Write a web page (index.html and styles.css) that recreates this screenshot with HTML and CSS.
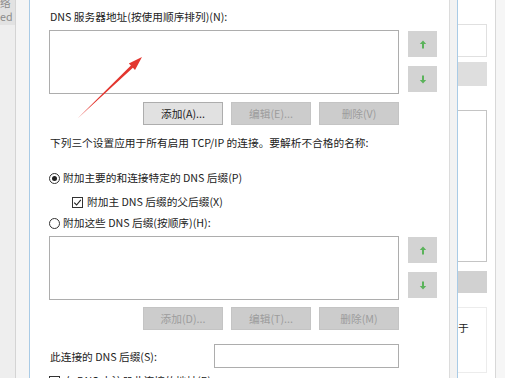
FILE: index.html
```html
<!DOCTYPE html>
<html lang="zh-CN">
<head>
  <meta charset="UTF-8">
  <title>DNS 设置</title>
  <link rel="stylesheet" href="styles.css">
</head>
<body>
  <div class="desk">
    <div class="left-win">
      <div class="left-tab"><span>络</span><span>ed</span></div>
    </div>
    <div class="left-frame"></div>

    <div class="dialog">
      <div class="label">DNS 服务器地址(按使用顺序排列)(N):</div>
      <div class="list-row">
        <div class="listbox"></div>
        <div class="side-btns">
          <div class="side-btn">
            <svg width="8" height="9" viewBox="0 0 8 9"><path d="M4 0.5 L0.8 4 H3 V8.5 H5 V4 H7.2 Z" fill="#5bb35b"/></svg>
          </div>
          <div class="side-btn">
            <svg width="8" height="9" viewBox="0 0 8 9"><path d="M4 8.5 L0.8 5 H3 V0.5 H5 V5 H7.2 Z" fill="#5bb35b"/></svg>
          </div>
        </div>
      </div>
      <div class="btn-row">
        <div class="btn on">添加(A)...</div>
        <div class="btn">编辑(E)...</div>
        <div class="btn">删除(V)</div>
      </div>

      <div class="note">下列三个设置应用于所有启用 TCP/IP 的连接。要解析不合格的名称:</div>

      <div class="option first">
        <span class="radio checked"></span>附加主要的和连接特定的 DNS 后缀(P)
      </div>
      <div class="option sub">
        <span class="check"><svg width="9" height="9" viewBox="0 0 9 9"><path d="M1.2 4.6 L3.6 7 L7.8 1.8" fill="none" stroke="#222" stroke-width="1.1"/></svg></span>附加主 DNS 后缀的父后缀(X)
      </div>
      <div class="option">
        <span class="radio"></span>附加这些 DNS 后缀(按顺序)(H):
      </div>

      <div class="list-row">
        <div class="listbox"></div>
        <div class="side-btns">
          <div class="side-btn">
            <svg width="8" height="9" viewBox="0 0 8 9"><path d="M4 0.5 L0.8 4 H3 V8.5 H5 V4 H7.2 Z" fill="#5bb35b"/></svg>
          </div>
          <div class="side-btn">
            <svg width="8" height="9" viewBox="0 0 8 9"><path d="M4 8.5 L0.8 5 H3 V0.5 H5 V5 H7.2 Z" fill="#5bb35b"/></svg>
          </div>
        </div>
      </div>
      <div class="btn-row second">
        <div class="btn">添加(D)...</div>
        <div class="btn">编辑(T)...</div>
        <div class="btn">删除(M)</div>
      </div>

      <div class="suffix-row">
        <span>此连接的 DNS 后缀(S):</span>
        <div class="textbox"></div>
      </div>
      <div class="option last">
        <span class="check"></span>在 DNS 中注册此连接的地址(R)
      </div>
    </div>

    <div class="right-frame"></div>
    <div class="right-win">
      <div class="r-input"></div>
      <div class="r-btn"></div>
      <div class="r-list"></div>
      <div class="r-btn dark"></div>
      <div class="r-box">于</div>
    </div>
    <div class="right-edge"></div>

    <svg class="arrow" width="505" height="378" viewBox="0 0 505 378">
      <polygon points="77,119 132.9,67.8 135,70 142,57 128.8,63.4 130.9,65.6" fill="#e3362f"/>
    </svg>
  </div>
</body>
</html>
```

FILE: styles.css
```css
body {
  margin: 0;
  width: 505px;
  height: 378px;
  overflow: hidden;
  font-family: "Noto Sans CJK SC", "Noto Sans", sans-serif;
  font-size: 10.7px;
  color: #222;
  background: #fff;
}

.desk {
  position: relative;
  display: flex;
  height: 378px;
}

/* window behind, left */
.left-win {
  width: 15px;
  background: #eeeeee;
  border-right: 1px solid #d4d4d4;
}

.left-tab {
  height: 25px;
  background: #e2e2e2;
  color: #8a8a8a;
  overflow: hidden;
  display: flex;
  flex-direction: column;
  line-height: 14px;
}

.left-tab span:first-child {
  margin-top: -4px;
}

.left-frame {
  width: 13px;
  background: #f5f5f5;
  border-right: 1px solid #a9cbe6;
}

/* main dialog */
.dialog {
  width: 420px;
  box-sizing: border-box;
  border-right: 1px solid #dcdcdc;
  padding: 9px 0 0 19px;
  background: #fff;
}

.label {
  line-height: 16px;
  padding-left: 1px;
}

.list-row {
  display: flex;
  margin-top: 5px;
}

.listbox {
  width: 350px;
  height: 64px;
  box-sizing: border-box;
  border: 1px solid #adadad;
  background: #fff;
}

.side-btns {
  display: flex;
  flex-direction: column;
  gap: 9px;
  margin: 1px 0 0 9px;
}

.side-btn {
  width: 29px;
  height: 26px;
  background: #d3d3d3;
  display: flex;
  align-items: center;
  justify-content: center;
}

.btn-row {
  display: flex;
  justify-content: flex-end;
  gap: 8px;
  width: 350px;
  margin-top: 8px;
}

.btn-row.second {
  margin-top: 7px;
}

.btn {
  width: 80px;
  height: 23px;
  box-sizing: border-box;
  border: 1px solid #c4c4c4;
  background: #cccccc;
  color: #9c9c9c;
  display: flex;
  align-items: center;
  justify-content: center;
}

.btn.on {
  background: #e1e1e1;
  border-color: #adadad;
  color: #222;
}

.note {
  margin-top: 10px;
  line-height: 16px;
  padding-left: 1px;
}

.option {
  display: flex;
  align-items: center;
  line-height: 16px;
  margin-top: 5px;
}

.option.first {
  margin-top: 19px;
}

.option.sub {
  margin-top: 8px;
  padding-left: 23px;
}

.option.last {
  margin-top: 5px;
}

.radio {
  position: relative;
  width: 11px;
  height: 11px;
  box-sizing: border-box;
  border: 1px solid #333;
  border-radius: 50%;
  margin-right: 3px;
}

.radio.checked::after {
  content: "";
  position: absolute;
  left: 2px;
  top: 2px;
  width: 5px;
  height: 5px;
  border-radius: 50%;
  background: #222;
}

.check {
  width: 11px;
  height: 11px;
  box-sizing: border-box;
  border: 1px solid #333;
  margin-right: 4px;
  display: flex;
  align-items: center;
  justify-content: center;
}

.suffix-row {
  display: flex;
  align-items: center;
  width: 350px;
  height: 24px;
  margin-top: 14px;
  padding-left: 1px;
  box-sizing: border-box;
}

.textbox {
  margin-left: auto;
  width: 185px;
  height: 24px;
  box-sizing: border-box;
  border: 1px solid #adadad;
}

/* window behind, right */
.right-frame {
  width: 7px;
  background: #f2f2f2;
  border-right: 1px solid #a9cbe6;
}

.right-win {
  width: 37px;
  padding-top: 24px;
  background: #fff;
}

.r-input {
  width: 29px;
  height: 33px;
  box-sizing: border-box;
  border: 1px solid #e0e0e0;
  border-left: none;
}

.r-btn {
  width: 29px;
  height: 24px;
  margin-top: 5px;
  background: #dedede;
}

.r-btn.dark {
  height: 22px;
  margin-top: 9px;
  background: #d1d1d1;
}

.r-list {
  width: 29px;
  height: 152px;
  margin-top: 24px;
  box-sizing: border-box;
  border: 1px solid #c4c4c4;
  border-left: none;
}

.r-box {
  width: 29px;
  height: 66px;
  margin-top: 14px;
  box-sizing: border-box;
  border: 1px solid #ececec;
  border-left: none;
  padding-top: 12px;
  line-height: 16px;
}

.right-edge {
  flex: 1;
  background: #f6f6f6;
  border-left: 1px solid #d8d8d8;
}

.arrow {
  position: absolute;
  left: 0;
  top: 0;
  pointer-events: none;
}
```
